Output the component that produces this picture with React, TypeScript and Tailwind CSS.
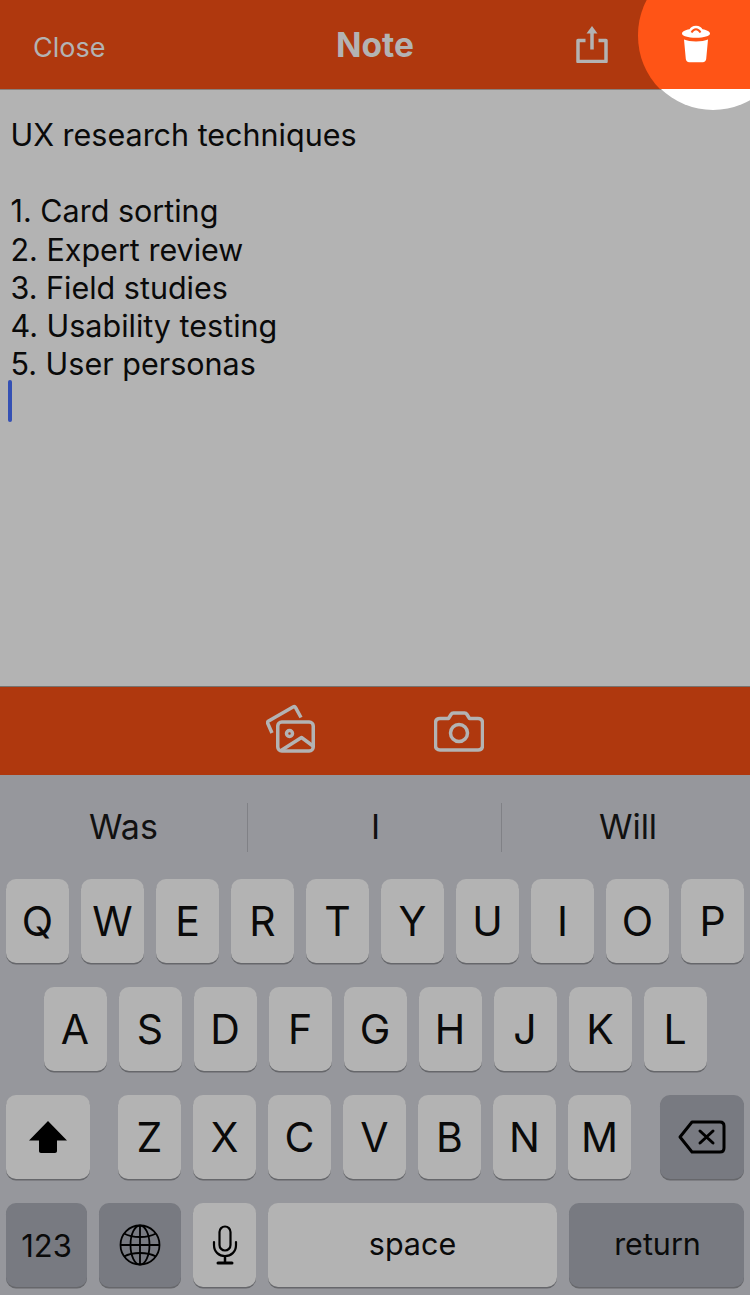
import type { ReactNode } from 'react'

const font = "font-['Inter','Liberation_Sans',sans-serif]"

const noteLines = ['UX research techniques', '\u00a0', '1. Card sorting', '2. Expert review', '3. Field studies', '4. Usability testing', '5. User personas']

function Key({ label, width = 'w-[63px]', dark, text = 'text-[41px]', children }: { label?: string; width?: string; dark?: boolean; text?: string; children?: ReactNode }) {
  return (
    <div className={`${width} h-[84px] shrink-0 rounded-[10px] flex items-center justify-center text-[#0a0a0a] ${text} shadow-[0_1.5px_0_#66676b] ${dark ? 'bg-[#787a81]' : 'bg-[#b3b3b3]'}`}>
      {label && <span className="mt-[2px]">{label}</span>}
      {children}
    </div>
  )
}

function ShareIcon() {
  return (
    <svg width="32" height="38" viewBox="0 0 32 38" fill="none" stroke="#b3b3b3" strokeWidth="3.500">
      <path d="M9.500 15.500H2v21h28v-21h-7.500" strokeLinejoin="round" />
      <path d="M16 6v18.500" />
      <path d="M16 1l5.500 7.500h-11z" fill="#b3b3b3" stroke="none" />
    </svg>
  )
}

function TrashIcon() {
  return (
    <svg width="30" height="38" viewBox="0 0 30 38" fill="#fff">
      <path d="M1 8.500c0-2 3-3.600 7.500-4.300C10 2 11.500 0.800 15 0.800s5 1.200 6.500 3.400C26 4.900 29 6.500 29 8.500c0 2.500-6 4.300-14 4.300S1 11 1 8.500z" />
      <path d="M10.500 7.500c1.200-2 2.700-3.200 4.500-3.200s3.300 1.200 4.500 3.200" fill="none" stroke="#ff5416" strokeWidth="2" />
      <path d="M3 14.500c3 1.300 7 1.900 12 1.900s9-.6 12-1.900l-1.800 19.500c-.2 2-1.500 3.200-3.500 3.200H8.300c-2 0-3.300-1.200-3.500-3.200z" />
    </svg>
  )
}

function GalleryIcon() {
  return (
    <svg width="50" height="50" viewBox="0 0 50 50" fill="none" stroke="#b3b3b3" strokeWidth="3.500" strokeLinejoin="round">
      <path d="M6 29L1.800 19.500c-.4-1-.2-1.800.8-2.400L27 3c1-.6 2-.4 2.600.6L35 13.500" />
      <rect x="11.750" y="18" width="35.500" height="29" rx="4" />
      <circle cx="23.500" cy="29.500" r="3" />
      <path d="M15 46.500L35.500 33.500L47 42" />
    </svg>
  )
}

function CameraIcon() {
  return (
    <svg width="50" height="42" viewBox="0 0 50 42" fill="none" stroke="#b3b3b3" strokeWidth="3.500" strokeLinejoin="round">
      <path d="M6 8.500h8.500l2.500-4c.6-1 1.400-1.500 2.500-1.500h11c1.100 0 1.900.5 2.500 1.500l2.500 4H44c2.800 0 4.500 1.700 4.500 4.500v22.500c0 2.800-1.700 4.500-4.500 4.500H6c-2.800 0-4.500-1.700-4.500-4.500V13c0-2.800 1.700-4.500 4.500-4.500z" />
      <circle cx="25" cy="23" r="8.500" />
    </svg>
  )
}

function ShiftIcon() {
  return (
    <svg width="38" height="32" viewBox="0 0 38 32" fill="#000">
      <path d="M19 0L38 19.500H28V30c0 1.200-.8 2-2 2H12c-1.200 0-2-.8-2-2V19.500H0z" strokeLinejoin="round" />
    </svg>
  )
}

function DeleteIcon() {
  return (
    <svg width="48" height="34" viewBox="0 0 48 34" fill="none" stroke="#000" strokeWidth="3" strokeLinejoin="round">
      <path d="M14 2h28c2.500 0 4 1.500 4 4v22c0 2.500-1.500 4-4 4H14L2 17z" />
      <path d="M22 11l13 12M35 11L22 23" strokeLinecap="round" />
    </svg>
  )
}

function GlobeIcon() {
  return (
    <svg width="42" height="42" viewBox="0 0 42 42" fill="none" stroke="#000" strokeWidth="1.800">
      <circle cx="21" cy="21" r="19.500" />
      <ellipse cx="21" cy="21" rx="9.500" ry="19.500" />
      <path d="M21 1.500v39M1.500 21h39" />
      <path d="M5 9.500c4.500 2.500 10 3.500 16 3.500s11.500-1 16-3.500M5 32.500c4.500-2.500 10-3.500 16-3.500s11.500 1 16 3.500" />
    </svg>
  )
}

function MicIcon() {
  return (
    <svg width="26" height="40" viewBox="0 0 26 40" fill="none" stroke="#000" strokeWidth="2.200">
      <rect x="7.500" y="1.500" width="11" height="24" rx="5.500" />
      <path d="M2 17v3c0 7 5 11 11 11s11-4 11-11v-3" strokeLinecap="round" />
      <path d="M13 31v6" strokeWidth="2.500" />
      <path d="M6 38h14" strokeWidth="3" strokeLinecap="round" />
    </svg>
  )
}

export default function App() {
  return (
    <div className={`${font} w-[750px] h-[1295px] flex flex-col overflow-hidden bg-[#b3b3b3]`}>
      {/* header */}
      <div className="relative h-[89px] shrink-0 bg-[#af380e] overflow-hidden flex items-center">
        <span className="ml-[33px] mt-[7px] text-[27px] text-[#b3b3b3]">Close</span>
        <span className="absolute left-0 right-0 top-[25px] text-center text-[33.500px] leading-[40px] font-bold text-[#b3b3b3]">Note</span>
        <div className="absolute left-[576px] top-[25px]">
          <ShareIcon />
        </div>
        <div className="absolute left-[638px] top-[-40px] w-[150px] h-[151px] rounded-full bg-[#ff5416]" />
        <div className="absolute left-[681px] top-[25px]">
          <TrashIcon />
        </div>
      </div>

      {/* note body */}
      <div className="relative h-[597px] shrink-0 overflow-hidden">
        <div className="h-px bg-[#8a807b]" />
        <div className="pl-[10.500px] pt-[26px] text-[30.500px] leading-[38.200px] text-[#0a0a0a]">
          {noteLines.map((line, i) => (
            <div key={i}>{line}</div>
          ))}
        </div>
        <div className="absolute left-[8px] top-[291px] w-1 h-[42px] rounded-sm bg-[#3450b4]" />
        <div className="absolute left-[638px] top-[-130px] w-[150px] h-[151px] rounded-full bg-white" />
      </div>

      {/* attachment bar */}
      <div className="relative h-[89px] shrink-0 bg-[#af380e] border-t border-[#77736f]">
        <div className="absolute left-[266px] top-[17px]">
          <GalleryIcon />
        </div>
        <div className="absolute left-[434px] top-[23px]">
          <CameraIcon />
        </div>
      </div>

      {/* keyboard */}
      <div className="flex-1 bg-[#96979c]">
        <div className="h-[104px] flex items-center text-[34px] text-[#111]">
          <div className="w-[247px] text-center pb-[2px]">Was</div>
          <div className="w-px h-[49px] bg-[#808186]" />
          <div className="w-[253px] text-center pb-[2px] pl-[2px]">I</div>
          <div className="w-px h-[49px] bg-[#808186]" />
          <div className="flex-1 text-center pb-[2px] pl-[4px]">Will</div>
        </div>
        <div className="flex flex-col gap-[24px]">
          <div className="flex justify-center gap-3">
            {'QWERTYUIOP'.split('').map((k) => (
              <Key key={k} label={k} />
            ))}
          </div>
          <div className="flex pl-[43.500px] gap-3">
            {'ASDFGHJKL'.split('').map((k) => (
              <Key key={k} label={k} />
            ))}
          </div>
          <div className="flex px-[6px]">
            <Key width="w-[84px]">
              <ShiftIcon />
            </Key>
            <div className="flex gap-3 ml-[28px]">
              {'ZXCVBNM'.split('').map((k) => (
                <Key key={k} label={k} />
              ))}
            </div>
            <div className="ml-auto">
              <Key width="w-[84px]" dark>
                <DeleteIcon />
              </Key>
            </div>
          </div>
          <div className="flex px-[6px] gap-3">
            <Key width="w-[81px]" dark label="123" text="text-[31px]" />
            <Key width="w-[82px]" dark>
              <GlobeIcon />
            </Key>
            <Key>
              <MicIcon />
            </Key>
            <Key width="w-[289px]" text="text-[30.500px]">
              <span className="pb-[2px]">space</span>
            </Key>
            <Key width="w-[175px]" dark text="text-[30.500px]">
              <span className="pb-[2px] pl-[2px]">return</span>
            </Key>
          </div>
        </div>
      </div>
    </div>
  )
}
